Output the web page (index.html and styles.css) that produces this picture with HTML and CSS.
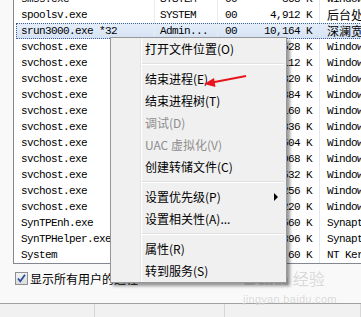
FILE: index.html
```html
<!DOCTYPE html>
<html lang="zh-CN">
<head>
    <meta charset="UTF-8">
    <title>任务管理器 - 进程</title>
    <link rel="stylesheet" href="styles.css">
</head>
<body>
    <div class="list">
        <div class="row"><span class="c-name">smss.exe</span><span class="c-user">SYSTEM</span><span class="c-cpu">00</span><span class="c-mem">368 K</span><span class="c-desc">Windows 会话管理器</span></div>
        <div class="row"><span class="c-name">spoolsv.exe</span><span class="c-user">SYSTEM</span><span class="c-cpu">00</span><span class="c-mem">4,912 K</span><span class="c-desc cjk">后台处理程序子系统应用程序</span></div>
        <div class="row sel"><span class="c-name">srun3000.exe *32</span><span class="c-user">Admin...</span><span class="c-cpu">00</span><span class="c-mem">10,164 K</span><span class="c-desc cjk">深澜宽带认证客户端</span></div>
        <div class="row"><span class="c-name">svchost.exe</span><span class="c-user">SYSTEM</span><span class="c-cpu">00</span><span class="c-mem">4,528 K</span><span class="c-desc">Windows 服务主进程</span></div>
        <div class="row"><span class="c-name">svchost.exe</span><span class="c-user">NETWO...</span><span class="c-cpu">00</span><span class="c-mem">4,112 K</span><span class="c-desc">Windows 服务主进程</span></div>
        <div class="row"><span class="c-name">svchost.exe</span><span class="c-user">LOCAL...</span><span class="c-cpu">00</span><span class="c-mem">3,320 K</span><span class="c-desc">Windows 服务主进程</span></div>
        <div class="row"><span class="c-name">svchost.exe</span><span class="c-user">SYSTEM</span><span class="c-cpu">00</span><span class="c-mem">6,884 K</span><span class="c-desc">Windows 服务主进程</span></div>
        <div class="row"><span class="c-name">svchost.exe</span><span class="c-user">LOCAL...</span><span class="c-cpu">00</span><span class="c-mem">2,160 K</span><span class="c-desc">Windows 服务主进程</span></div>
        <div class="row"><span class="c-name">svchost.exe</span><span class="c-user">NETWO...</span><span class="c-cpu">00</span><span class="c-mem">5,336 K</span><span class="c-desc">Windows 服务主进程</span></div>
        <div class="row"><span class="c-name">svchost.exe</span><span class="c-user">LOCAL...</span><span class="c-cpu">00</span><span class="c-mem">1,504 K</span><span class="c-desc">Windows 服务主进程</span></div>
        <div class="row"><span class="c-name">svchost.exe</span><span class="c-user">SYSTEM</span><span class="c-cpu">00</span><span class="c-mem">2,068 K</span><span class="c-desc">Windows 服务主进程</span></div>
        <div class="row"><span class="c-name">svchost.exe</span><span class="c-user">SYSTEM</span><span class="c-cpu">00</span><span class="c-mem">18,532 K</span><span class="c-desc">Windows 服务主进程</span></div>
        <div class="row"><span class="c-name">svchost.exe</span><span class="c-user">LOCAL...</span><span class="c-cpu">00</span><span class="c-mem">3,256 K</span><span class="c-desc">Windows 服务主进程</span></div>
        <div class="row"><span class="c-name">svchost.exe</span><span class="c-user">SYSTEM</span><span class="c-cpu">00</span><span class="c-mem">1,220 K</span><span class="c-desc">Windows 服务主进程</span></div>
        <div class="row"><span class="c-name">SynTPEnh.exe</span><span class="c-user">Admin...</span><span class="c-cpu">00</span><span class="c-mem">2,560 K</span><span class="c-desc">Synaptics TouchPad</span></div>
        <div class="row"><span class="c-name">SynTPHelper.exe</span><span class="c-user">Admin...</span><span class="c-cpu">00</span><span class="c-mem">1,396 K</span><span class="c-desc">Synaptics Pointing</span></div>
        <div class="row"><span class="c-name">System</span><span class="c-user">SYSTEM</span><span class="c-cpu">00</span><span class="c-mem">60 K</span><span class="c-desc">NT Kernel &amp; System</span></div>
    </div>

    <label class="show-all">
        <span class="check">
            <svg width="11" height="11" viewBox="0 0 11 11"><path d="M2 5.5 L4.3 8.3 L9 1.8" fill="none" stroke="#2b4e9e" stroke-width="1.8"/></svg>
        </span>
        显示所有用户的进程
    </label>

    <div class="status"><span></span><span></span><span></span></div>

    <div class="watermark">
        <div class="wm-logo">Bai<span class="paw">du</span><span class="wm-cn">经验</span></div>
        <div class="wm-url">jingyan.baidu.com</div>
    </div>

    <div class="menu">
        <div class="item">打开文件位置(O)</div>
        <div class="sep"></div>
        <div class="item">结束进程(E)</div>
        <div class="item">结束进程树(T)</div>
        <div class="item disabled">调试(D)</div>
        <div class="item disabled">UAC 虚拟化(V)</div>
        <div class="item">创建转储文件(C)</div>
        <div class="sep"></div>
        <div class="item">设置优先级(P)<span class="sub"></span></div>
        <div class="item">设置相关性(A)...</div>
        <div class="sep"></div>
        <div class="item">属性(R)</div>
        <div class="item">转到服务(S)</div>
    </div>

    <svg class="arrow" width="361" height="317" viewBox="0 0 361 317">
        <line x1="246" y1="76" x2="212" y2="82.5" stroke="#e8161c" stroke-width="2"/>
        <polygon points="204,84 214,78 215.5,87" fill="#e8161c"/>
    </svg>
</body>
</html>
```

FILE: styles.css
```css
body {
    margin: 0;
    width: 361px;
    height: 317px;
    overflow: hidden;
    position: relative;
    background-color: #f9f9f9;
    font-family: "Noto Sans CJK SC", sans-serif;
    font-size: 12px;
    color: #000;
}

/* process list */
.list {
    margin: -9px 0 0 13px;
    width: 420px;
    padding-left: 2px;
    background-color: #fff;
    border-left: 1px solid #828790;
    border-bottom: 1px solid #828790;
}

.row {
    display: grid;
    grid-template-columns: 139px 63px 27px 75px 1fr;
    height: 16px;
    line-height: 16px;
    font-family: "Liberation Mono", monospace;
    font-size: 11px;
    letter-spacing: -0.6px;
    white-space: nowrap;
}

.row span {
    overflow: hidden;
    box-sizing: border-box;
}

.c-name {
    padding-left: 5px;
    border-right: 1px solid #ececec;
}

.c-user {
    padding-left: 5px;
    border-right: 1px solid #ececec;
}

.c-cpu {
    padding-left: 7px;
}

.c-mem {
    text-align: right;
    padding-right: 7px;
    border-right: 1px solid #dfe8f4;
}

.c-desc {
    padding-left: 7px;
}

.cjk {
    font-family: "Noto Sans CJK SC", sans-serif;
    font-size: 12px;
    letter-spacing: 0;
}

.row.sel {
    background: linear-gradient(#e6eefa, #d4e2f4);
    outline: 1px dotted #3d5f8e;
    outline-offset: -1px;
}

/* checkbox */
.show-all {
    display: flex;
    align-items: center;
    gap: 2px;
    height: 13px;
    margin: 8px 0 0 15px;
    line-height: 13px;
}

.check {
    width: 13px;
    height: 13px;
    box-sizing: border-box;
    border: 1px solid #8e8f8f;
    background: linear-gradient(#f3f3f3, #dcdcdc);
    display: flex;
    align-items: center;
    justify-content: center;
}

/* status bar */
.status {
    margin-top: 18px;
    height: 13px;
    border-top: 1px solid #a0a0a0;
    background-color: #f1f1f1;
    display: grid;
    grid-template-columns: 95px 130px 1fr;
}

.status span {
    border-right: 1px solid #d7d7d7;
}

/* context menu */
.menu {
    position: absolute;
    left: 110px;
    top: 37px;
    width: 177px;
    box-sizing: border-box;
    border: 1px solid #979797;
    background-color: #f0f0f0;
    box-shadow: 3px 3px 3px rgba(0, 0, 0, 0.4);
}

.menu::before {
    content: "";
    position: absolute;
    left: 29px;
    top: 0;
    bottom: 0;
    width: 1px;
    background-color: #e2e3e3;
    border-right: 1px solid #fff;
}

.item {
    position: relative;
    height: 22px;
    line-height: 22px;
    padding-left: 34px;
}

.item.disabled {
    color: #8d8d8d;
}

.sub {
    position: absolute;
    right: 8px;
    top: 7px;
    width: 0;
    height: 0;
    border-left: 4px solid #000;
    border-top: 4px solid transparent;
    border-bottom: 4px solid transparent;
}

.sep {
    position: relative;
    height: 8px;
    margin: 0 2px 0 31px;
}

.sep::after {
    content: "";
    position: absolute;
    left: 0;
    right: 0;
    top: 3px;
    border-top: 1px solid #e0e0e0;
    border-bottom: 1px solid #fff;
}

/* red pointer */
.arrow {
    position: absolute;
    left: 0;
    top: 0;
    pointer-events: none;
}

/* watermark */
.watermark {
    position: absolute;
    left: 243px;
    top: 266px;
    color: rgba(185, 185, 185, 0.55);
    text-shadow: 0 0 1px #fff;
    pointer-events: none;
}

.wm-logo {
    font-family: "Liberation Sans", sans-serif;
    font-size: 20px;
    font-weight: bold;
    line-height: 24px;
}

.paw {
    font-size: 12px;
    margin-right: 4px;
}

.wm-cn {
    font-family: "Noto Sans CJK SC", sans-serif;
    font-size: 16px;
    font-weight: normal;
}

.wm-url {
    font-family: "Liberation Sans", sans-serif;
    font-size: 11px;
    line-height: 12px;
    letter-spacing: 0.3px;
}
```
